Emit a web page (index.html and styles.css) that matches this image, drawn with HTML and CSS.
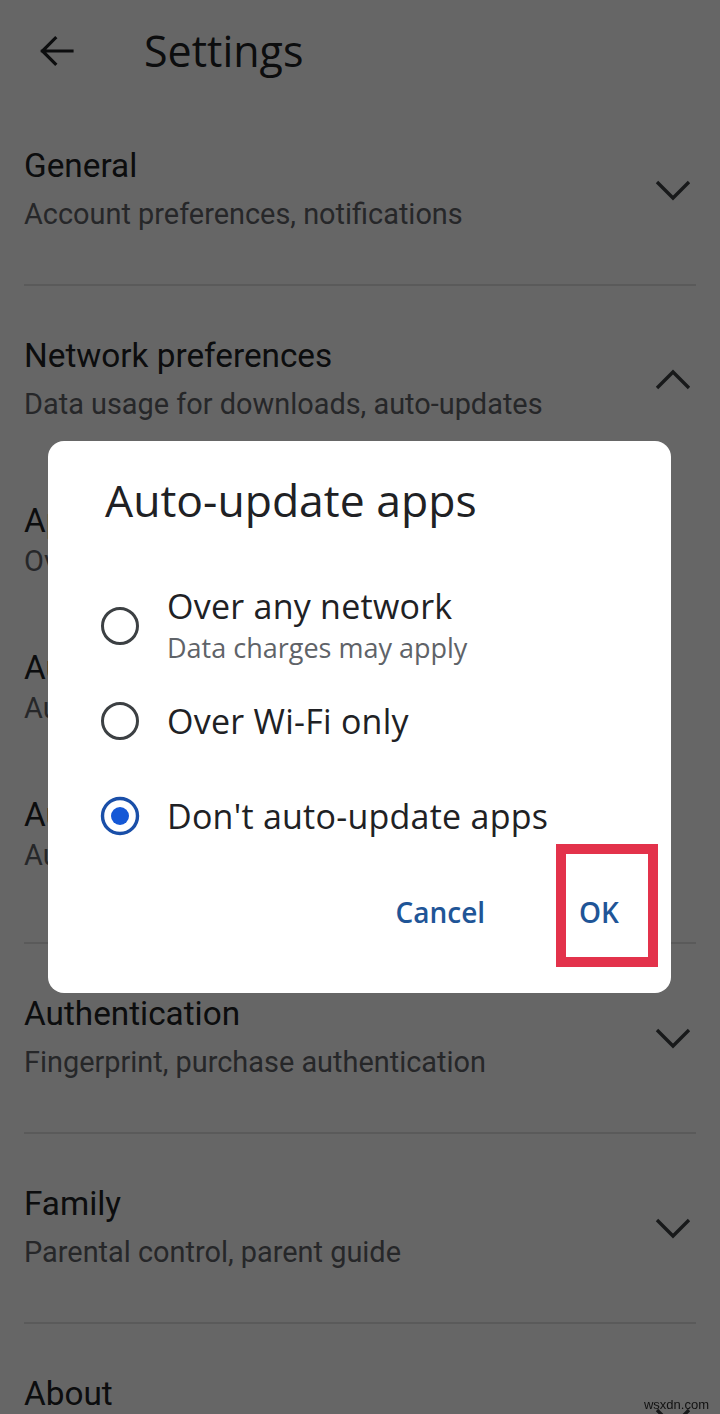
FILE: index.html
```html
<!DOCTYPE html>
<html lang="en">
<head>
<meta charset="utf-8">
<title>Settings</title>
<link rel="stylesheet" href="styles.css">
</head>
<body>
<div class="screen">
  <header class="appbar">
    <svg class="back" viewBox="0 0 24 24" width="48" height="48" aria-hidden="true">
      <path d="M20 12H5.2M11.6 5.6 5.2 12l6.4 6.4" fill="none" stroke="#202124" stroke-width="1.6" stroke-linecap="square"/>
    </svg>
    <h1 class="appbar-title">Settings</h1>
  </header>

  <section class="row">
    <div class="row-head">
      <div class="row-text">
        <div class="row-title">General</div>
        <div class="row-sub">Account preferences, notifications</div>
      </div>
      <svg class="chev" viewBox="0 0 46 24" width="46" height="24" aria-hidden="true"><polyline points="7,4 23,20 39,4" fill="none" stroke="#3c4043" stroke-width="3.4"/></svg>
    </div>
  </section>

  <section class="row">
    <div class="row-head">
      <div class="row-text">
        <div class="row-title">Network preferences</div>
        <div class="row-sub">Data usage for downloads, auto-updates</div>
      </div>
      <svg class="chev" viewBox="0 0 46 24" width="46" height="24" aria-hidden="true"><polyline points="7,20 23,4 39,20" fill="none" stroke="#3c4043" stroke-width="3.4"/></svg>
    </div>
    <div class="subitems">
      <div class="subitem">
        <div class="sub-title">App download preference</div>
        <div class="sub-sub">Over any network</div>
      </div>
      <div class="subitem">
        <div class="sub-title">Auto-update apps</div>
        <div class="sub-sub">Auto-update apps is turned off</div>
      </div>
      <div class="subitem">
        <div class="sub-title">Auto-play videos</div>
        <div class="sub-sub">Auto-play videos over Wi-Fi only</div>
      </div>
    </div>
  </section>

  <section class="row">
    <div class="row-head">
      <div class="row-text">
        <div class="row-title">Authentication</div>
        <div class="row-sub">Fingerprint, purchase authentication</div>
      </div>
      <svg class="chev" viewBox="0 0 46 24" width="46" height="24" aria-hidden="true"><polyline points="7,4 23,20 39,4" fill="none" stroke="#3c4043" stroke-width="3.4"/></svg>
    </div>
  </section>

  <section class="row">
    <div class="row-head">
      <div class="row-text">
        <div class="row-title">Family</div>
        <div class="row-sub">Parental control, parent guide</div>
      </div>
      <svg class="chev" viewBox="0 0 46 24" width="46" height="24" aria-hidden="true"><polyline points="7,4 23,20 39,4" fill="none" stroke="#3c4043" stroke-width="3.4"/></svg>
    </div>
  </section>

  <section class="row">
    <div class="row-head">
      <div class="row-text">
        <div class="row-title">About</div>
        <div class="row-sub">Version, certification, licences</div>
      </div>
      <svg class="chev" viewBox="0 0 46 24" width="46" height="24" aria-hidden="true"><polyline points="7,4 23,20 39,4" fill="none" stroke="#3c4043" stroke-width="3.4"/></svg>
    </div>
  </section>
</div>

<div class="scrim">
  <div class="dialog" role="dialog">
    <h2 class="dialog-title">Auto-update apps</h2>
    <div class="options">
      <div class="option">
        <svg class="radio" viewBox="0 0 40 40" width="40" height="40" aria-hidden="true"><circle cx="20" cy="20" r="17.5" fill="none" stroke="#3c4043" stroke-width="3"/></svg>
        <div class="opt-text">
          <div class="opt-title">Over any network</div>
          <div class="opt-sub">Data charges may apply</div>
        </div>
      </div>
      <div class="option">
        <svg class="radio" viewBox="0 0 40 40" width="40" height="40" aria-hidden="true"><circle cx="20" cy="20" r="17.5" fill="none" stroke="#3c4043" stroke-width="3"/></svg>
        <div class="opt-text">
          <div class="opt-title">Over Wi-Fi only</div>
        </div>
      </div>
      <div class="option">
        <svg class="radio" viewBox="0 0 40 40" width="40" height="40" aria-hidden="true"><circle cx="20" cy="20" r="17.5" fill="none" stroke="#1a4fa8" stroke-width="3.4"/><circle cx="20" cy="20" r="9" fill="#1558d6"/></svg>
        <div class="opt-text">
          <div class="opt-title">Don't auto-update apps</div>
        </div>
      </div>
    </div>
    <div class="actions">
      <button class="btn">Cancel</button>
      <button class="btn btn-ok">OK</button>
    </div>
  </div>
</div>

<div class="watermark">wsxdn.com</div>
</body>
</html>
```

FILE: styles.css
```css
html, body {
  margin: 0;
  padding: 0;
  background: #ffffff;
}

body {
  width: 720px;
  height: 1414px;
  overflow: hidden;
  font-family: Roboto, "Noto Sans", sans-serif;
  color: #202124;
}

.screen {
  width: 720px;
}

.appbar {
  height: 96px;
  box-sizing: border-box;
  padding: 6px 0 0 32px;
  display: flex;
  align-items: center;
  gap: 64px;
}

.back {
  display: block;
  flex: none;
}

.appbar-title {
  margin: 0;
  font-family: "Open Sans", sans-serif;
  font-weight: 400;
  font-size: 43px;
  line-height: 48px;
  color: #202124;
}

.row {
  margin: 0 24px;
  padding: 50px 0;
  border-bottom: 2px solid #e2e2e2;
}

.row-head {
  height: 88px;
  display: flex;
  align-items: center;
  justify-content: space-between;
}

.row-title {
  font-size: 33.3px;
  line-height: 40px;
  color: #202124;
  white-space: nowrap;
}

.row-sub {
  margin-top: 8px;
  font-size: 28.9px;
  line-height: 40px;
  color: #5f6368;
  white-space: nowrap;
}

.chev {
  display: block;
  flex: none;
}

.subitems {
  padding: 79px 0 19px;
  display: flex;
  flex-direction: column;
  gap: 71px;
}

.subitem {
  height: 76px;
}

.sub-title {
  font-size: 33.3px;
  line-height: 36px;
  color: #202124;
  white-space: nowrap;
}

.sub-sub {
  margin-top: 4px;
  font-size: 28.9px;
  line-height: 36px;
  color: #5f6368;
  white-space: nowrap;
}

/* modal */
.scrim {
  position: fixed;
  inset: 0;
  background: rgba(0, 0, 0, 0.6);
  padding: 441px 0 0 48px;
}

.dialog {
  width: 623px;
  height: 552px;
  box-sizing: border-box;
  padding: 35px 40px 0 52px;
  background: #ffffff;
  border-radius: 16px;
  display: flex;
  flex-direction: column;
}

.dialog-title {
  margin: 0 0 0 5px;
  font-family: "Open Sans", sans-serif;
  font-weight: 400;
  font-size: 44.5px;
  line-height: 48px;
  color: #202124;
  white-space: nowrap;
}

.options {
  margin-top: 54px;
}

.option {
  height: 95px;
  display: flex;
  align-items: center;
  gap: 27px;
}

.radio {
  display: block;
  flex: none;
}

.opt-title {
  font-family: "Open Sans", sans-serif;
  font-size: 34px;
  letter-spacing: 0.25px;
  line-height: 36px;
  color: #202124;
  white-space: nowrap;
}

.opt-sub {
  margin-top: 8px;
  font-family: "Open Sans", sans-serif;
  font-size: 27px;
  line-height: 32px;
  color: #5f6368;
  white-space: nowrap;
}

.actions {
  margin-top: 21px;
  height: 56px;
  display: flex;
  justify-content: flex-end;
  align-items: center;
  gap: 70px;
}

.btn {
  height: 56px;
  padding: 0 12px;
  border: 0;
  background: transparent;
  font-family: "Open Sans", sans-serif;
  font-weight: 600;
  font-size: 28px;
  color: #1f5597;
}

.btn-ok {
  position: relative;
}

.btn-ok::after {
  content: "";
  position: absolute;
  left: -11px;
  top: -40px;
  width: 102px;
  height: 123px;
  box-sizing: border-box;
  border: 10px solid #e3324b;
}

.watermark {
  position: fixed;
  right: 11px;
  bottom: 2px;
  font-family: "Liberation Sans", Arial, sans-serif;
  font-size: 13px;
  line-height: 14px;
  color: #111111;
}
```
